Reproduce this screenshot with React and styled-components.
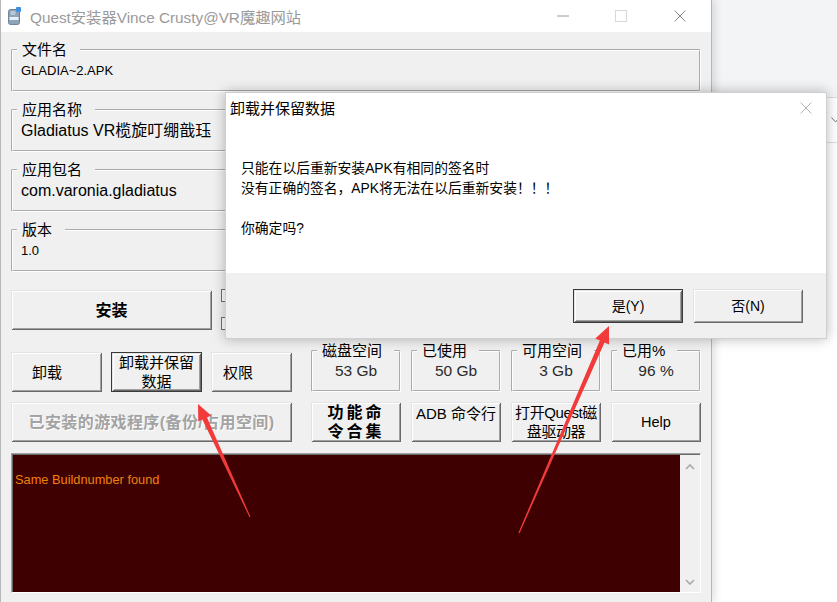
import React from 'react';
import styled, { createGlobalStyle } from 'styled-components';

const FONT = `"Liberation Sans", "Noto Sans CJK SC", sans-serif`;

const GlobalStyle = createGlobalStyle`
  html, body { margin: 0; padding: 0; background: #fff; }
  body { font-family: ${FONT}; }
  #root { width: 837px; height: 602px; }
`;

const Desktop = styled.div`
  position: relative;
  width: 837px;
  height: 602px;
  overflow: hidden;
  display: flex;
  background: #fff;
`;

const MainWindow = styled.div`
  position: relative;
  z-index: 1;
  flex: none;
  width: 712px;
  height: 602px;
  box-sizing: border-box;
  border-left: 1px solid #b8b8b8;
  border-right: 1px solid #b5b5b5;
  background: #f0f0f0;
  box-shadow: 3px 0 8px rgba(0, 0, 0, 0.12);
  display: flex;
  flex-direction: column;
`;

const TitleBar = styled.div`
  height: 32px;
  flex: none;
  background: #fff;
  display: flex;
  align-items: center;
`;

const AppIcon = styled.svg`
  margin-left: 7px;
  flex: none;
`;

const TitleText = styled.div`
  margin-left: 9px;
  font-size: 15.3px;
  color: #9a9a9a;
  white-space: nowrap;
  flex: 1;
`;

const WinControls = styled.div`
  display: flex;
  height: 32px;
  margin-right: 1px;
`;

const CtrlBtn = styled.div`
  width: ${(p) => p.$w}px;
  height: 32px;
  display: flex;
  align-items: center;
  justify-content: center;
`;

const Body = styled.div`
  display: flex;
  flex-direction: column;
  padding: 10px 10px 0 10px;
`;

const GroupBox = styled.fieldset`
  box-sizing: border-box;
  margin: ${(p) => p.$mt || 0}px 0 0;
  padding: 0 4px;
  height: ${(p) => p.$h}px;
  width: ${(p) => (p.$w ? `${p.$w}px` : 'auto')};
  min-width: 0;
  border: 2px groove #fff;
  border-radius: 2px;
  flex: none;
`;

const GroupLabel = styled.legend`
  padding: 0 ${(p) => p.$pr || 13}px 0 5px;
  margin: 0;
  font-size: 15px;
  line-height: 16px;
  color: #000;
  white-space: nowrap;
`;

const GroupValue = styled.div`
  margin: 3px 0 0 4px;
  font-size: ${(p) => p.$size || 13}px;
  line-height: 20px;
  color: #000;
  white-space: nowrap;
  overflow: hidden;
`;

const StatValue = styled.div`
  margin-top: 2px;
  text-align: center;
  font-size: 15.5px;
  line-height: 20px;
  color: #2a2a2a;
`;

const Row = styled.div`
  display: flex;
  margin-top: ${(p) => p.$mt}px;
  height: ${(p) => p.$h}px;
  flex: none;
`;

const LeftCluster = styled.div`
  width: 281px;
  display: flex;
  gap: 9px;
  align-items: flex-end;
  margin-right: 19px;
`;

const RightCluster = styled.div`
  width: 390px;
  display: flex;
  gap: 10px;
  align-items: ${(p) => p.$align || 'stretch'};
`;

const ClassicButton = styled.button`
  box-sizing: border-box;
  width: ${(p) => p.$w}px;
  height: ${(p) => p.$h || 40}px;
  margin: 0;
  padding: ${(p) => (p.$top ? '1px 0 0' : '0')} ${(p) => p.$pr || 0}px 0 ${(p) => p.$pl || 0}px;
  display: flex;
  flex-direction: column;
  align-items: ${(p) => (p.$pl ? 'flex-start' : 'center')};
  justify-content: ${(p) => (p.$top ? 'flex-start' : 'center')};
  background: #f0f0f0;
  border: ${(p) => (p.$default ? '1px solid #3a3a3a' : 'none')};
  box-shadow: inset 1px 1px #e3e3e3, inset -1px -1px #696969, inset 2px 2px #fff,
    inset -2px -2px #a0a0a0;
  font-family: ${FONT};
  font-size: ${(p) => p.$fs || 15}px;
  line-height: 19px;
  font-weight: ${(p) => (p.$bold ? 700 : 400)};
  letter-spacing: ${(p) => p.$ls || 0}px;
  color: ${(p) => (p.disabled ? '#a3a3a3' : '#000')};
  text-shadow: ${(p) => (p.disabled ? '1px 1px #fff' : 'none')};
  white-space: nowrap;
  flex: none;
  cursor: default;
`;

const CheckCol = styled.div`
  display: flex;
  flex-direction: column;
  gap: 15px;
  margin: -1px 0 0 9px;
`;

const CheckBox = styled.span`
  display: block;
  width: 13px;
  height: 13px;
  box-sizing: border-box;
  border: 1px solid #707070;
  background: #fff;
`;

const LogBox = styled.div`
  margin-top: 11px;
  height: 140px;
  box-sizing: border-box;
  display: flex;
  border-top: 1px solid #a0a0a0;
  border-left: 1px solid #a0a0a0;
  border-bottom: 1px solid #fff;
  border-right: 1px solid #fff;
  box-shadow: inset 1px 1px #696969;
  padding: 1px 0 0 1px;
`;

const LogText = styled.div`
  flex: 1;
  background: #3e0000;
  color: #f08010;
  font-size: 12.8px;
  line-height: 16px;
  padding: 17px 0 0 2px;
`;

const ScrollBar = styled.div`
  width: 20px;
  background: #f0f0f0;
  display: flex;
  flex-direction: column;
  justify-content: space-between;
  align-items: center;
  padding: 9px 0 7px;
  box-sizing: border-box;
`;

const BackApp = styled.div`
  flex: 1;
  display: flex;
  flex-direction: column;
`;

const BackHeader = styled.div`
  height: 97px;
  background: #f3f4f6;
  border-bottom: 1px solid #dcdcdc;
`;

const BackRow = styled.div`
  height: 44px;
  border-bottom: 1px solid #dcdcdc;
  display: flex;
  align-items: center;
  justify-content: flex-end;
`;

const Dialog = styled.div`
  position: absolute;
  left: 225px;
  top: 92px;
  z-index: 5;
  width: 602px;
  height: 247px;
  box-sizing: border-box;
  background: #fff;
  border: 1px solid #cfcfcf;
  box-shadow: 0 0 12px rgba(0, 0, 0, 0.28);
  display: flex;
  flex-direction: column;
`;

const DlgTitle = styled.div`
  height: 29px;
  display: flex;
  align-items: center;
  justify-content: space-between;
  padding: 0 14px 0 4px;
  font-size: 15px;
  color: #000;
`;

const DlgBody = styled.div`
  flex: 1;
  padding: 37px 0 0 15px;
  font-size: 13.8px;
  line-height: 20px;
  color: #000;
`;

const DlgFooter = styled.div`
  height: 65px;
  box-sizing: border-box;
  background: #f0f0f0;
  display: flex;
  justify-content: flex-end;
  gap: 10px;
  padding: 16px 23px 0 0;
`;

const Overlay = styled.svg`
  position: absolute;
  left: 0;
  top: 0;
  z-index: 10;
  pointer-events: none;
`;

function Chevron({ up }) {
  return (
    <svg width="10" height="6" viewBox="0 0 10 6">
      <polyline
        points={up ? '1,5 5,1 9,5' : '1,1 5,5 9,1'}
        fill="none"
        stroke="#a8a8a8"
        strokeWidth="1.6"
      />
    </svg>
  );
}

function XIcon({ color, size = 12 }) {
  return (
    <svg width={size} height={size} viewBox={`0 0 ${size} ${size}`}>
      <path
        d={`M0.5 0.5 L${size - 0.5} ${size - 0.5} M${size - 0.5} 0.5 L0.5 ${size - 0.5}`}
        stroke={color}
        strokeWidth="1"
      />
    </svg>
  );
}

export default function App() {
  return (
    <>
      <GlobalStyle />
      <Desktop>
        <MainWindow>
          <TitleBar>
            <AppIcon width="13" height="18" viewBox="0 0 13 18">
              <rect x="0.5" y="2.5" width="11" height="15" rx="2" fill="#8ea2b8" stroke="#6f849b" />
              <rect x="1.5" y="10" width="9" height="3" fill="#e9eef4" />
              <rect x="2.5" y="4" width="5" height="4" rx="1" fill="#b9c7d6" />
              <rect x="8" y="0" width="5" height="5" rx="1" fill="#3f8fe0" />
            </AppIcon>
            <TitleText>Quest安装器Vince Crusty@VR魔趣网站</TitleText>
            <WinControls>
              <CtrlBtn $w={58}>
                <svg width="12" height="2" viewBox="0 0 12 2">
                  <line x1="0" y1="1" x2="12" y2="1" stroke="#9a9a9a" />
                </svg>
              </CtrlBtn>
              <CtrlBtn $w={58}>
                <svg width="12" height="12" viewBox="0 0 12 12">
                  <rect x="0.5" y="0.5" width="11" height="11" fill="none" stroke="#d8d8d8" />
                </svg>
              </CtrlBtn>
              <CtrlBtn $w={60}>
                <XIcon color="#8a8a8a" />
              </CtrlBtn>
            </WinControls>
          </TitleBar>

          <Body>
            <GroupBox $h={50}>
              <GroupLabel>文件名</GroupLabel>
              <GroupValue>GLADIA~2.APK</GroupValue>
            </GroupBox>
            <GroupBox $h={50} $mt={10}>
              <GroupLabel>应用名称</GroupLabel>
              <GroupValue $size={16}>Gladiatus VR榄旋叮绷戠珏</GroupValue>
            </GroupBox>
            <GroupBox $h={50} $mt={10}>
              <GroupLabel>应用包名</GroupLabel>
              <GroupValue $size={16}>com.varonia.gladiatus</GroupValue>
            </GroupBox>
            <GroupBox $h={50} $mt={10}>
              <GroupLabel>版本</GroupLabel>
              <GroupValue>1.0</GroupValue>
            </GroupBox>

            <Row $mt={18} $h={40}>
              <ClassicButton $w={201} $bold $fs={16}>安装</ClassicButton>
              <CheckCol>
                <CheckBox />
                <CheckBox />
              </CheckCol>
            </Row>

            <Row $mt={13} $h={49}>
              <LeftCluster>
                <ClassicButton $w={91} $pl={21}>卸载</ClassicButton>
                <ClassicButton $w={91} $default>
                  <span>卸载并保留</span>
                  <span>数据</span>
                </ClassicButton>
                <ClassicButton $w={81} $pl={12}>权限</ClassicButton>
              </LeftCluster>
              <RightCluster>
                {[
                  ['磁盘空间', '53 Gb'],
                  ['已使用', '50 Gb'],
                  ['可用空间', '3 Gb'],
                  ['已用%', '96 %'],
                ].map(([label, value]) => (
                  <GroupBox key={label} $h={49} $w={90}>
                    <GroupLabel $pr={12}>{label}</GroupLabel>
                    <StatValue>{value}</StatValue>
                  </GroupBox>
                ))}
              </RightCluster>
            </Row>

            <Row $mt={10} $h={40}>
              <LeftCluster>
                <ClassicButton $w={281} disabled $bold $fs={16} $ls={0.4}>
                  已安装的游戏程序(备份/占用空间)
                </ClassicButton>
              </LeftCluster>
              <RightCluster>
                <ClassicButton $w={90} $bold $fs={16} $ls={3}>
                  <span>功能命</span>
                  <span>令合集</span>
                </ClassicButton>
                <ClassicButton $w={90} $top>
                  <span style={{ marginTop: 1 }}>ADB 命令行</span>
                </ClassicButton>
                <ClassicButton $w={90} $ls={-0.4}>
                  <span>打开Quest磁</span>
                  <span>盘驱动器</span>
                </ClassicButton>
                <ClassicButton $w={90} $fs={14.5}>Help</ClassicButton>
              </RightCluster>
            </Row>

            <LogBox>
              <LogText>Same Buildnumber found</LogText>
              <ScrollBar>
                <Chevron up />
                <Chevron />
              </ScrollBar>
            </LogBox>
          </Body>
        </MainWindow>

        <BackApp>
          <BackHeader />
          <BackRow>
            <svg width="9" height="6" viewBox="0 0 9 6" style={{ marginRight: -3 }}>
              <polyline points="0.5,0.5 4.5,5 8.5,0.5" fill="none" stroke="#777" />
            </svg>
          </BackRow>
        </BackApp>

        <Dialog>
          <DlgTitle>
            <span>卸载并保留数据</span>
            <XIcon color="#b4b4b4" />
          </DlgTitle>
          <DlgBody>
            <div>只能在以后重新安装APK有相同的签名时</div>
            <div>没有正确的签名，APK将无法在以后重新安装！！！</div>
            <div>&nbsp;</div>
            <div>你确定吗?</div>
          </DlgBody>
          <DlgFooter>
            <ClassicButton $w={110} $h={34} $default $fs={14}>是(Y)</ClassicButton>
            <ClassicButton $w={110} $h={34} $fs={14}>否(N)</ClassicButton>
          </DlgFooter>
        </Dialog>

        <Overlay width="837" height="602" viewBox="0 0 837 602">
          <polygon
            fill="#f23a3a"
            points="250.45,516.8 207,417.5 211.1,415.6 198,404 198.3,421.4 202.4,419.5 249.55,517.2"
          />
          <polygon
            fill="#f23a3a"
            points="519.55,533.24 604.5,342.6 609.1,344.6 609,326 595.3,338.6 599.9,340.6 518.45,532.76"
          />
        </Overlay>
      </Desktop>
    </>
  );
}
